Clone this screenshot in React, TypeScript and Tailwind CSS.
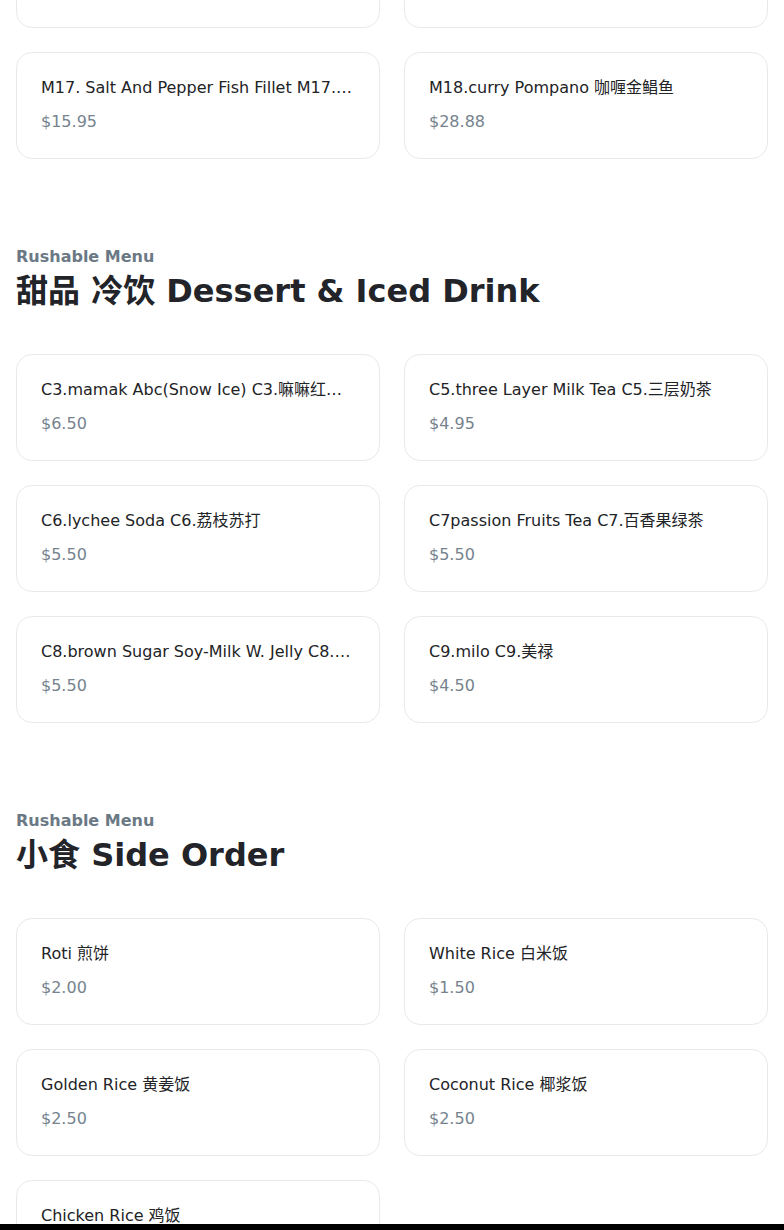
import React from "react";

type Item = { name: string; price: string };
type Section = { title: string; items: Item[] };

const sections: Section[] = [
  {
    title: "咖喱 鱼 Main",
    items: [
      { name: "M15. Curry Fish Head M15.咖喱鱼头", price: "$32.88" },
      { name: "M16. Assam Fish M16.亚参鱼", price: "$26.88" },
      { name: "M17. Salt And Pepper Fish Fillet M17.椒盐鱼片", price: "$15.95" },
      { name: "M18.curry Pompano 咖喱金鲳鱼", price: "$28.88" },
    ],
  },
  {
    title: "甜品 冷饮 Dessert & Iced Drink",
    items: [
      { name: "C3.mamak Abc(Snow Ice) C3.嘛嘛红豆冰", price: "$6.50" },
      { name: "C5.three Layer Milk Tea C5.三层奶茶", price: "$4.95" },
      { name: "C6.lychee Soda C6.荔枝苏打", price: "$5.50" },
      { name: "C7passion Fruits Tea C7.百香果绿茶", price: "$5.50" },
      { name: "C8.brown Sugar Soy-Milk W. Jelly C8.黑糖豆奶果冻", price: "$5.50" },
      { name: "C9.milo C9.美禄", price: "$4.50" },
    ],
  },
  {
    title: "小食 Side Order",
    items: [
      { name: "Roti 煎饼", price: "$2.00" },
      { name: "White Rice 白米饭", price: "$1.50" },
      { name: "Golden Rice 黄姜饭", price: "$2.50" },
      { name: "Coconut Rice 椰浆饭", price: "$2.50" },
      { name: "Chicken Rice 鸡饭", price: "$2.50" },
    ],
  },
];

function Card({ item }: { item: Item }) {
  return (
    <div className="h-[107px] rounded-2xl border border-[#e9e9eb] bg-white px-6 pt-[23px]">
      <div className="truncate text-base leading-6 text-[#222326]">{item.name}</div>
      <div className="mt-[10px] text-base leading-6 text-[#76838e]">{item.price}</div>
    </div>
  );
}

function Grid({ items }: { items: Item[] }) {
  return (
    <div className="grid grid-cols-2 gap-6">
      {items.map((it) => (
        <Card key={it.name} item={it} />
      ))}
    </div>
  );
}

export default function App() {
  const font = {
    fontFamily: '"DejaVu Sans", "Noto Sans CJK SC", sans-serif',
  };
  return (
    <div className="min-h-[1230px] bg-white" style={font}>
      <div className="-mt-[79px] px-4 pb-10">
        <Grid items={sections[0].items} />
        {sections.slice(1).map((s) => (
          <section key={s.title} className="pt-[86px]">
            <div className="text-base font-bold leading-6 text-[#6b7985]">Rushable Menu</div>
            <h2 className="text-[32px] font-bold leading-[44px] text-[#222429]">{s.title}</h2>
            <div className="mt-[41px]">
              <Grid items={s.items} />
            </div>
          </section>
        ))}
      </div>
      <div className="fixed bottom-0 left-0 right-0 h-[6px] bg-black" />
    </div>
  );
}
